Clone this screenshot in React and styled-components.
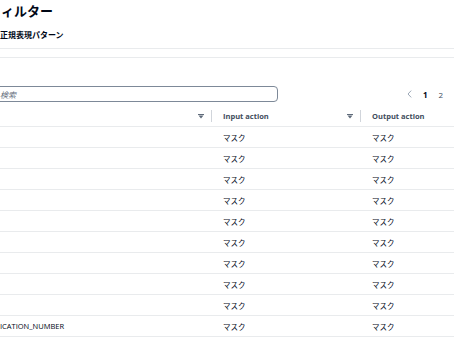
import React from "react";
import styled, { createGlobalStyle } from "styled-components";

const GlobalStyle = createGlobalStyle`
  html, body {
    margin: 0;
    padding: 0;
    background: #fff;
    overflow: hidden;
  }
  body {
    font-family: "Open Sans", "Noto Sans CJK JP", sans-serif;
    font-size: 7.5px;
    color: #000716;
  }
`

const Viewport = styled.div`
  width: 454px;
  height: 341px;
  overflow: hidden;
`

const Canvas = styled.div`
  width: 700px;
  margin-left: -6px;
  display: flex;
  flex-direction: column;
`

const Title = styled.h1`
  margin: 0;
  padding-left: 7px;
  font-size: 13px;
  line-height: 22px;
  font-weight: 700;
  color: #000716;
`

const SubTitle = styled.h2`
  margin: 7px 0 0;
  padding-left: 6px;
  font-size: 8px;
  line-height: 12px;
  font-weight: 700;
  color: #000716;
`

const Rule = styled.div`
  height: 1px;
  background: #e9ebed;
  margin-top: ${(p) => p.$gap}px;
`

const Toolbar = styled.div`
  margin-top: 28px;
  height: 16px;
  display: flex;
  align-items: center;
`

const SearchBox = styled.div`
  width: 284px;
  height: 16px;
  box-sizing: border-box;
  border: 1px solid #7d8998;
  border-radius: 4px;
  padding-left: 5px;
  display: flex;
  align-items: center;
  font-style: italic;
  color: #5f6b7a;
  font-size: 8px;
`

const Pagination = styled.div`
  margin-left: 129px;
  display: flex;
  align-items: center;
  gap: 11px;
  font-size: 8px;
`

const PageNum = styled.span`
  font-weight: ${(p) => (p.$active ? 700 : 400)};
  color: ${(p) => (p.$active ? "#000716" : "#414d5c")};
`

const Table = styled.div`
  display: grid;
  grid-template-columns: 218px 149px 1fr;
`

const HeadCell = styled.div`
  height: 25px;
  box-sizing: border-box;
  border-bottom: 1px solid #e9ebed;
  padding: 4px 0 0 ${(p) => p.$pad}px;
  display: flex;
  align-items: center;
  font-weight: 700;
  color: #414d5c;
`

const HeadLabel = styled.span`
  flex: 1;
`

const Divider = styled.span`
  width: 1px;
  height: 12px;
  margin-left: 7px;
  background: #d1d5db;
`

const Cell = styled.div`
  height: 21px;
  box-sizing: border-box;
  border-bottom: 1px solid #e9ebed;
  padding-left: ${(p) => p.$pad}px;
  display: flex;
  align-items: center;
  color: #000716;
  white-space: nowrap;
`

const FilterIcon = () => (
  <svg width="6" height="5" viewBox="0 0 6 5">
    <path d="M0 0.5h6" stroke="#5f6b7a" strokeWidth="1" />
    <polygon points="0.5,1.5 5.5,1.5 3,4.5" fill="#5f6b7a" />
  </svg>
)

const ChevronLeft = () => (
  <svg width="5" height="8" viewBox="0 0 5 8">
    <path d="M4.2 0.6L1 4l3.2 3.4" fill="none" stroke="#9ba7b6" strokeWidth="1" />
  </svg>
)

const rows = ["", "", "", "", "", "", "", "", "", "ICATION_NUMBER"]

const App = () => {
  return (
    <Viewport>
      <GlobalStyle />
      <Canvas>
        <Title>ィルター</Title>
        <SubTitle>正規表現パターン</SubTitle>
        <Rule $gap={7} />
        <Rule $gap={8} />
        <Toolbar>
          <SearchBox>検索</SearchBox>
          <Pagination>
            <ChevronLeft />
            <PageNum $active>1</PageNum>
            <PageNum>2</PageNum>
          </Pagination>
        </Toolbar>
        <Table>
          <HeadCell $pad={6}>
            <HeadLabel />
            <FilterIcon />
            <Divider />
          </HeadCell>
          <HeadCell $pad={11}>
            <HeadLabel>Input action</HeadLabel>
            <FilterIcon />
            <Divider />
          </HeadCell>
          <HeadCell $pad={11}>
            <HeadLabel>Output action</HeadLabel>
          </HeadCell>
          {rows.map((name, i) => (
            <React.Fragment key={i}>
              <Cell $pad={6}>{name}</Cell>
              <Cell $pad={11}>マスク</Cell>
              <Cell $pad={11}>マスク</Cell>
            </React.Fragment>
          ))}
        </Table>
      </Canvas>
    </Viewport>
  )
}

export default App
